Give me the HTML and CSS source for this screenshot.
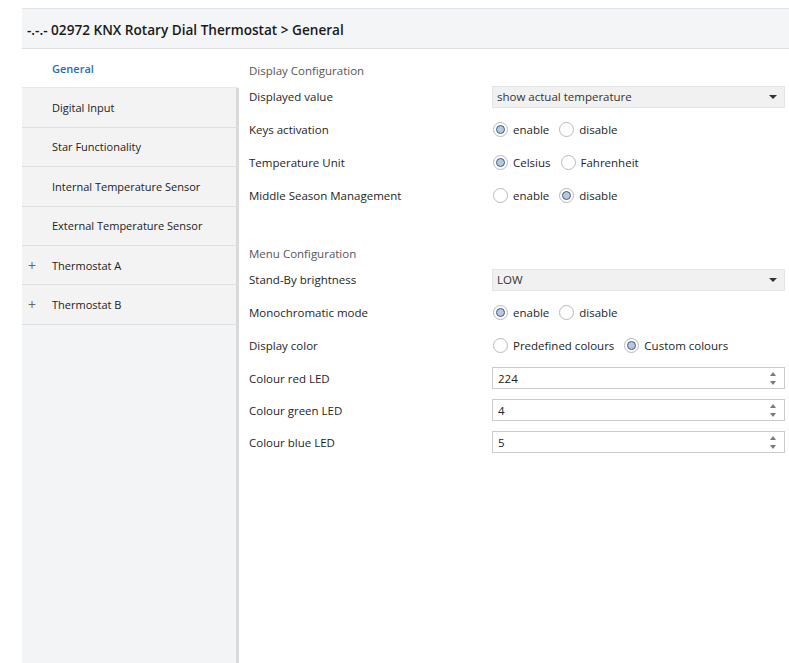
FILE: index.html
```html
<!DOCTYPE html>
<html>
<head>
<meta charset="utf-8">
<link rel="stylesheet" href="styles.css">
</head>
<body>
<div class="app">
  <div class="header">-.-.- 02972 KNX Rotary Dial Thermostat &gt; General</div>
  <div class="main">
    <nav class="sidebar">
      <div class="item active"><span class="exp"></span>General</div>
      <div class="item"><span class="exp"></span>Digital Input</div>
      <div class="item"><span class="exp"></span>Star Functionality</div>
      <div class="item"><span class="exp"></span>Internal Temperature Sensor</div>
      <div class="item"><span class="exp"></span>External Temperature Sensor</div>
      <div class="item"><span class="exp">+</span>Thermostat A</div>
      <div class="item"><span class="exp">+</span>Thermostat B</div>
      <div class="filler"></div>
    </nav>
    <section class="content">
      <div class="section-title">Display Configuration</div>
      <div class="row">
        <div class="label">Displayed value</div>
        <div class="control"><div class="select">show actual temperature<span class="caret"></span></div></div>
      </div>
      <div class="row">
        <div class="label">Keys activation</div>
        <div class="control radios">
          <span class="radio checked"><i></i>enable</span>
          <span class="radio"><i></i>disable</span>
        </div>
      </div>
      <div class="row">
        <div class="label">Temperature Unit</div>
        <div class="control radios">
          <span class="radio checked"><i></i>Celsius</span>
          <span class="radio"><i></i>Fahrenheit</span>
        </div>
      </div>
      <div class="row">
        <div class="label">Middle Season Management</div>
        <div class="control radios">
          <span class="radio"><i></i>enable</span>
          <span class="radio checked"><i></i>disable</span>
        </div>
      </div>

      <div class="section-title second">Menu Configuration</div>
      <div class="row">
        <div class="label">Stand-By brightness</div>
        <div class="control"><div class="select">LOW<span class="caret"></span></div></div>
      </div>
      <div class="row">
        <div class="label">Monochromatic mode</div>
        <div class="control radios">
          <span class="radio checked"><i></i>enable</span>
          <span class="radio"><i></i>disable</span>
        </div>
      </div>
      <div class="row">
        <div class="label">Display color</div>
        <div class="control radios">
          <span class="radio"><i></i>Predefined colours</span>
          <span class="radio checked"><i></i>Custom colours</span>
        </div>
      </div>
      <div class="row spin-row">
        <div class="label">Colour red LED</div>
        <div class="control"><div class="spin">224<span class="arrows"><b class="up"></b><b class="down"></b></span></div></div>
      </div>
      <div class="row spin-row">
        <div class="label">Colour green LED</div>
        <div class="control"><div class="spin">4<span class="arrows"><b class="up"></b><b class="down"></b></span></div></div>
      </div>
      <div class="row spin-row">
        <div class="label">Colour blue LED</div>
        <div class="control"><div class="spin">5<span class="arrows"><b class="up"></b><b class="down"></b></span></div></div>
      </div>
    </section>
  </div>
</div>
</body>
</html>
```

FILE: styles.css
```css
html, body {
  margin: 0;
  padding: 0;
  background: #ffffff;
}
body {
  font-family: "Open Sans", "Noto Sans", "Liberation Sans", sans-serif;
  font-size: 11.5px;
  color: #1e1e1e;
}
.app {
  padding: 8px 0 0 22px;
  height: 663px;
  box-sizing: border-box;
  display: flex;
  flex-direction: column;
}
.header {
  height: 41px;
  box-sizing: border-box;
  border-top: 1px solid #e2e3e6;
  border-bottom: 1px solid #dcdde0;
  background: #f4f5f7;
  padding-left: 5px;
  display: flex;
  align-items: center;
  font-size: 13.6px;
  font-weight: 600;
  color: #1a1a1a;
  padding-top: 1px;
}
.main {
  flex: 1;
  display: flex;
  min-height: 0;
}
.sidebar {
  width: 217px;
  flex: none;
  display: flex;
  flex-direction: column;
  font-size: 11px;
}
.item {
  height: 39.4px;
  box-sizing: border-box;
  display: flex;
  align-items: center;
  background: #f3f3f4;
  border-bottom: 1px solid #dedfe1;
  border-right: 3px solid #d9d9dc;
  color: #222;
}
.item.active {
  background: #ffffff;
  border-right-color: #ffffff;
  color: #2b6cb0;
  font-weight: 600;
  border-bottom-color: #e6e6e8;
}
.exp {
  width: 30px;
  box-sizing: border-box;
  flex: none;
  padding-left: 6px;
  color: #666;
  font-size: 14px;
}
.filler {
  flex: 1;
  background: #f3f4f6;
  border-right: 3px solid #d9d9dc;
}
.content {
  flex: 1;
  padding: 11px 4px 0 10px;
}
.section-title {
  height: 20px;
  display: flex;
  align-items: center;
  color: #555;
}
.section-title.second {
  margin-top: 31px;
}
.row {
  height: 33px;
  display: grid;
  grid-template-columns: 243px 1fr;
  align-items: center;
}
.row.spin-row {
  height: 32px;
}
.select {
  height: 22px;
  box-sizing: border-box;
  background: #f1f1f1;
  border: 1px solid #e4e4e4;
  display: flex;
  align-items: center;
  padding-left: 4px;
  position: relative;
  color: #333;
}
.caret {
  position: absolute;
  right: 7px;
  top: 8px;
  width: 0;
  height: 0;
  border-left: 4px solid transparent;
  border-right: 4px solid transparent;
  border-top: 4px solid #333;
}
.radios {
  display: flex;
  align-items: center;
  gap: 9px;
}
.radio {
  display: inline-flex;
  align-items: center;
  gap: 5px;
}
.radio i {
  width: 15px;
  height: 15px;
  box-sizing: border-box;
  border-radius: 50%;
  border: 1px solid #b9b9b9;
  background: #fff;
  display: inline-flex;
  align-items: center;
  justify-content: center;
  margin-left: 1px;
}
.radio.checked i::after {
  content: "";
  width: 9px;
  height: 9px;
  box-sizing: border-box;
  border-radius: 50%;
  border: 1.5px solid #3f5b80;
  background: #b7c7dc;
}
.spin {
  height: 22px;
  box-sizing: border-box;
  border: 1px solid #cbcbcb;
  background: #fff;
  display: flex;
  align-items: center;
  padding-left: 5px;
  position: relative;
  color: #222;
}
.arrows {
  position: absolute;
  right: 8px;
  top: 4px;
  display: flex;
  flex-direction: column;
  gap: 5px;
}
.arrows b {
  width: 0;
  height: 0;
  border-left: 3px solid transparent;
  border-right: 3px solid transparent;
}
.arrows .up {
  border-bottom: 4px solid #7a7a7a;
}
.arrows .down {
  border-top: 4px solid #7a7a7a;
}
```
